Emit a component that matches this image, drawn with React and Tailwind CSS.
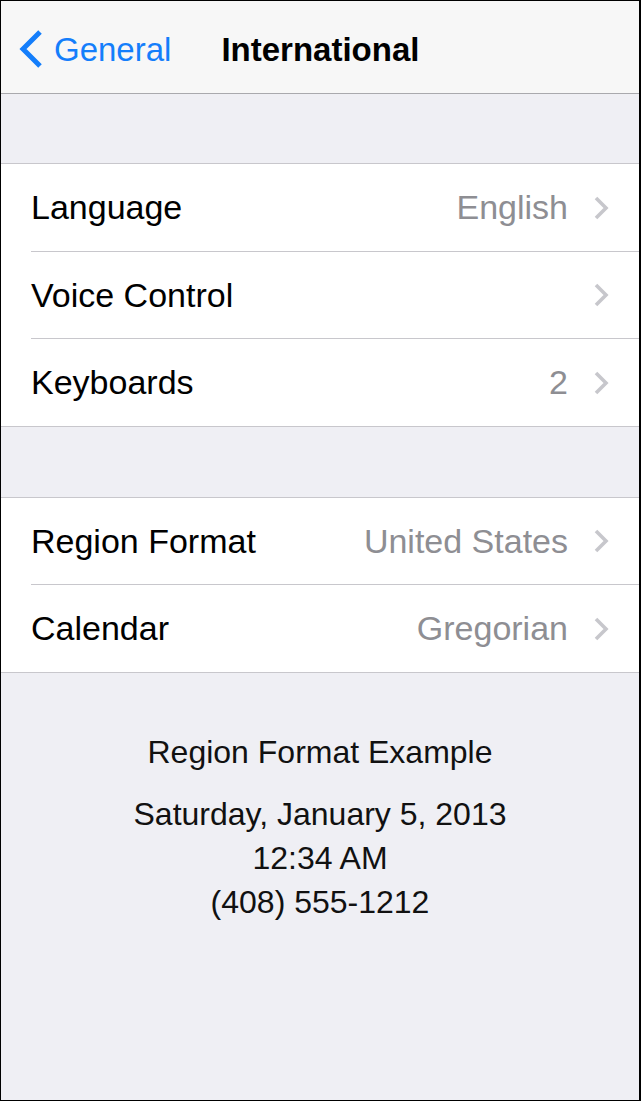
import React from "react";

function Chevron() {
  return (
    <svg width="16" height="26" viewBox="0 0 16 26" className="shrink-0">
      <polyline
        points="3,3 13,13 3,23"
        fill="none"
        stroke="#c7c7cc"
        strokeWidth="3.6"
        strokeLinecap="butt"
        strokeLinejoin="miter"
      />
    </svg>
  );
}

function Row({ label, value, last, tall }) {
  return (
    <div
      className={
        "flex items-stretch bg-white pl-[30px] " + (tall ? "h-[88px]" : "h-[87px]")
      }
    >
      <div
        className={
          "flex flex-1 items-center pr-[30px] " +
          (last ? "" : "border-b border-[#c8c7cc]")
        }
      >
        <span className="flex-1 text-[34px] text-black">{label}</span>
        {value && (
          <span className="mr-[25px] text-[34px] text-[#8e8e93]">{value}</span>
        )}
        <Chevron />
      </div>
    </div>
  );
}

export default function App() {
  const group1 = [
    { label: "Language", value: "English" },
    { label: "Voice Control", value: "" },
    { label: "Keyboards", value: "2" },
  ];
  const group2 = [
    { label: "Region Format", value: "United States" },
    { label: "Calendar", value: "Gregorian" },
  ];

  return (
    <div
      className="flex h-[1101px] w-[641px] flex-col overflow-hidden border border-r-2 border-black bg-[#efeff4]"
      style={{ fontFamily: '"Liberation Sans", Arial, sans-serif' }}
    >
      {/* Nav bar */}
      <div className="flex h-[93px] shrink-0 items-center border-b border-[#a9a9ad] bg-[#f7f7f7] pt-[6px]">
        <div className="flex items-center pl-[15px]">
          <svg width="30" height="42" viewBox="0 0 30 42">
            <polyline
              points="24,3 7,20 24,37"
              fill="none"
              stroke="#147efb"
              strokeWidth="5"
              strokeLinejoin="miter"
            />
          </svg>
          <span className="ml-[8px] text-[33px] text-[#147efb]">General</span>
        </div>
        <span className="ml-[50px] text-[33px] font-bold text-black">
          International
        </span>
      </div>

      <div className="h-[69px] shrink-0" />

      <div className="border-y border-[#c8c7cc]">
        {group1.map((r, i) => (
          <Row
            key={r.label}
            {...r}
            tall={i === 0}
            last={i === group1.length - 1}
          />
        ))}
      </div>

      <div className="h-[70px] shrink-0" />

      <div className="border-y border-[#c8c7cc]">
        {group2.map((r, i) => (
          <Row key={r.label} {...r} last={i === group2.length - 1} />
        ))}
      </div>

      {/* Footer example */}
      <div className="flex flex-col items-center pt-[59px] text-[32px] text-[#111]">
        <div className="leading-[40px]">Region Format Example</div>
        <div className="mt-[20px] flex flex-col items-center leading-[44px]">
          <div>Saturday, January 5, 2013</div>
          <div>12:34 AM</div>
          <div>(408) 555-1212</div>
        </div>
      </div>
    </div>
  );
}
